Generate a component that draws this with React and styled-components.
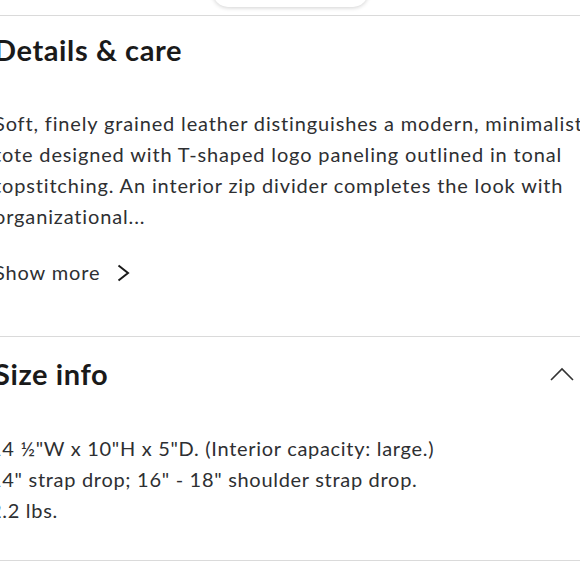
import React from "react";
import styled, { createGlobalStyle } from "styled-components";

const Global = createGlobalStyle`
  body {
    margin: 0;
    background: #fff;
    font-family: Lato, "Open Sans", sans-serif;
    color: #2e2f32;
    overflow: hidden;
  }
`;

const Page = styled.div`
  width: 580px;
  height: 580px;
  overflow: hidden;
  background: #fff;
`;

const TopStrip = styled.div`
  height: 15px;
  display: flex;
  justify-content: center;
`;

const Pill = styled.div`
  width: 155px;
  height: 30px;
  margin-top: -23px;
  border-radius: 16px;
  background: #fff;
  box-shadow: 0 1px 4px rgba(0, 0, 0, 0.18);
`;

const Divider = styled.div`
  height: 1px;
  background: #dadada;
`;

const Section = styled.section`
  margin-left: -6px;
  padding: ${(p) => p.$pad};
`;

const HeadRow = styled.div`
  display: flex;
  align-items: center;
  justify-content: space-between;
`;

const Heading = styled.h2`
  margin: 0;
  font-size: 29px;
  line-height: 36px;
  font-weight: 700;
  letter-spacing: 0.6px;
  color: #1a1a1a;
`;

const Body = styled.p`
  margin: ${(p) => p.$margin};
  font-size: 20px;
  line-height: 31px;
  letter-spacing: 0.85px;
  white-space: nowrap;
`;

const SizeBody = styled(Body)`
  margin-left: -4px;
  letter-spacing: 0.7px;
`;

const ShowMore = styled.button`
  margin-top: 25px;
  display: flex;
  align-items: center;
  gap: 16px;
  padding: 0;
  border: 0;
  background: none;
  font-family: inherit;
  font-size: 20px;
  line-height: 31px;
  letter-spacing: 0.85px;
  color: #2e2f32;
`;

const Toggle = styled.span`
  display: flex;
  margin-right: 6px;
`;

function ChevronRight() {
  return (
    <svg width="15" height="18" viewBox="0 0 15 18">
      <path d="M2.5 1.5 L12 9 L2.5 16.5" fill="none" stroke="#1a1a1a" strokeWidth="2" />
    </svg>
  );
}

function ChevronUp() {
  return (
    <svg width="24" height="16" viewBox="0 0 24 16">
      <path d="M1 14 L12 3 L23 14" fill="none" stroke="#333" strokeWidth="1.6" />
    </svg>
  );
}

export default function App() {
  return (
    <Page>
      <Global />
      <TopStrip>
        <Pill />
      </TopStrip>
      <Divider />
      <Section $pad="16px 0 48px">
        <Heading>Details &amp; care</Heading>
        <Body $margin="40px 0 0">
          Soft, finely grained leather distinguishes a modern, minimalist
          <br />
          tote designed with T-shaped logo paneling outlined in tonal
          <br />
          topstitching. An interior zip divider completes the look with
          <br />
          organizational...
        </Body>
        <ShowMore>
          Show more
          <ChevronRight />
        </ShowMore>
      </Section>
      <Divider />
      <Section $pad="19px 0 34px">
        <HeadRow>
          <Heading>Size info</Heading>
          <Toggle>
            <ChevronUp />
          </Toggle>
        </HeadRow>
        <SizeBody $margin="41px 0 0">
          14 ½"W x 10"H x 5"D. (Interior capacity: large.)
          <br />
          14" strap drop; 16" - 18" shoulder strap drop.
          <br />
          2.2 lbs.
        </SizeBody>
      </Section>
      <Divider />
    </Page>
  );
}
